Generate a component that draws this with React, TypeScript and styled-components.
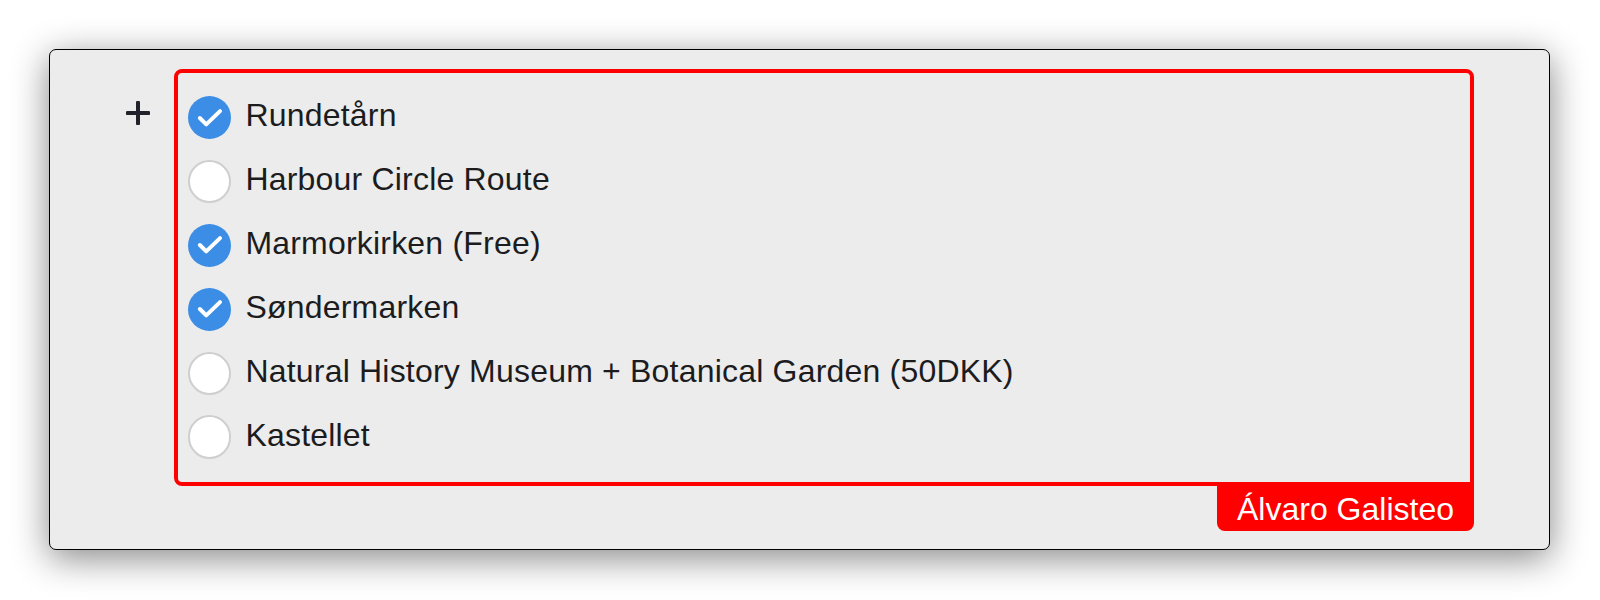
import React from "react";
import styled, { createGlobalStyle } from "styled-components";

const GlobalStyle = createGlobalStyle`
  html, body {
    margin: 0;
    padding: 0;
    background: #ffffff;
  }
  body {
    font-family: "Liberation Sans", Arial, sans-serif;
  }
`;

const Page = styled.div`
  width: 1600px;
  height: 600px;
  padding: 49px;
  box-sizing: border-box;
`;

const Card = styled.div`
  width: 1501px;
  box-sizing: border-box;
  background: #ececec;
  border: 1px solid #000;
  border-radius: 7px;
  box-shadow: 0 8px 36px rgba(0, 0, 0, 0.48);
  padding: 19px 75px 18px 76px;
  display: flex;
  align-items: flex-start;
  gap: 24px;
`;

const AddButton = styled.div`
  width: 24px;
  height: 24px;
  margin-top: 32px;
  flex: none;
  display: flex;
  align-items: center;
  justify-content: center;
`;

const Section = styled.div`
  flex: 1;
  display: flex;
  flex-direction: column;
  align-items: flex-end;
`;

const Frame = styled.div`
  align-self: stretch;
  border: 4px solid #ff0000;
  border-radius: 8px;
  border-bottom-right-radius: 0;
  padding: 12.75px 10px 13.25px 10px;
  display: flex;
  flex-direction: column;
`;

const Row = styled.label`
  height: 63.9px;
  display: flex;
  align-items: center;
  gap: 14px;
`;

const Circle = styled.span<{ $checked: boolean }>`
  width: 43.4px;
  height: 43.4px;
  box-sizing: border-box;
  border-radius: 50%;
  flex: none;
  background: ${(p) => (p.$checked ? "#3b8de6" : "#ffffff")};
  border: ${(p) => (p.$checked ? "none" : "2px solid #cfcfcf")};
  display: flex;
  align-items: center;
  justify-content: center;
`;

const Text = styled.span`
  font-size: 32px;
  color: #1c1c1e;
  letter-spacing: 0.2px;
  margin-bottom: 4px;
  white-space: nowrap;
`;

const Tag = styled.div`
  background: #ff0000;
  color: #ffffff;
  font-size: 32px;
  padding: 4.5px 20px 3px 20px;
  border-radius: 0 0 8px 8px;
  white-space: nowrap;
`;

const items = [
  { label: "Rundetårn", checked: true },
  { label: "Harbour Circle Route", checked: false },
  { label: "Marmorkirken (Free)", checked: true },
  { label: "Søndermarken", checked: true },
  { label: "Natural History Museum + Botanical Garden (50DKK)", checked: false },
  { label: "Kastellet", checked: false },
];

const Check = () => (
  <svg width="44" height="44" viewBox="0 0 44 44">
    <path
      d="M12 22 L18.5 28.5 L32.5 15"
      fill="none"
      stroke="#ffffff"
      strokeWidth="4"
      strokeLinecap="round"
      strokeLinejoin="round"
    />
  </svg>
);

const Plus = () => (
  <svg width="24" height="24" viewBox="0 0 24 24">
    <path
      d="M12 1.5 V22.5 M1.5 12 H22.5"
      stroke="#22222c"
      strokeWidth="4"
      strokeLinecap="round"
    />
  </svg>
);

export default function App() {
  return (
    <>
      <GlobalStyle />
      <Page>
        <Card>
          <AddButton>
            <Plus />
          </AddButton>
          <Section>
            <Frame>
              {items.map((it) => (
                <Row key={it.label}>
                  <Circle $checked={it.checked}>{it.checked && <Check />}</Circle>
                  <Text>{it.label}</Text>
                </Row>
              ))}
            </Frame>
            <Tag>Álvaro Galisteo</Tag>
          </Section>
        </Card>
      </Page>
    </>
  );
}
